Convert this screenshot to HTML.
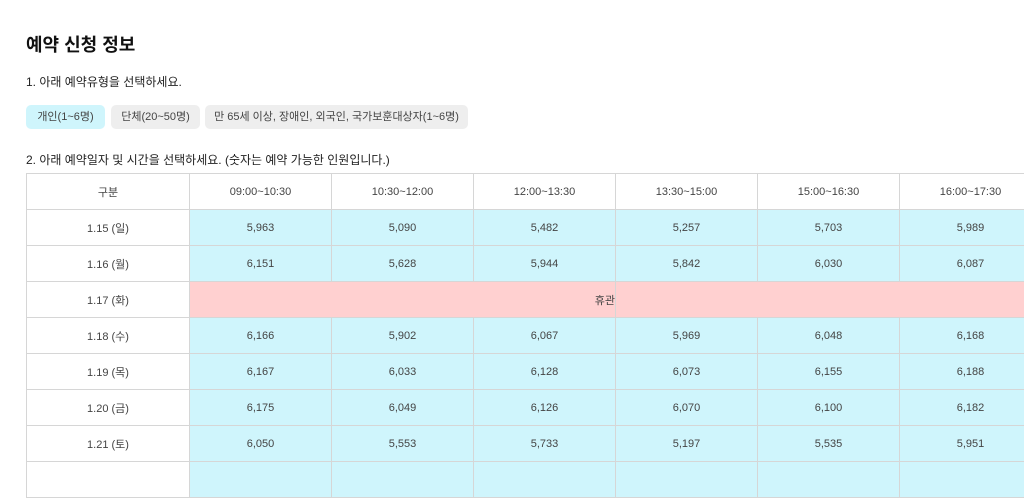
<!DOCTYPE html><html><head><meta charset="utf-8"><style>
*{margin:0;padding:0;box-sizing:border-box}
body{width:1024px;height:466px;overflow:hidden;background:#fff;font-family:"Liberation Sans","Noto Sans CJK KR",sans-serif;color:#222;position:relative}
h1{position:absolute;left:26px;top:31px;font-size:18px;font-weight:bold;color:#111}
.p{position:absolute;left:26px;font-size:12px;color:#222}
.b{position:absolute;top:105px;height:24px;border-radius:5px;background:#eee;font-size:11px;color:#444;text-align:center;line-height:24px}
table{position:absolute;left:26px;top:173px;border-collapse:collapse;table-layout:fixed;width:1157px}
td{border:1px solid #d6d6d6;height:36px;text-align:center;font-size:11px;color:#444}
td.c{background:#cff5fc}
td.r{background:#ffd0d0}
</style></head><body>
<h1>예약 신청 정보</h1>
<div class="p" style="top:73px">1. 아래 예약유형을 선택하세요.</div>
<div class="b" style="left:26px;width:79px;background:#cff5fc">개인(1~6명)</div>
<div class="b" style="left:111px;width:89px">단체(20~50명)</div>
<div class="b" style="left:205px;width:263px">만 65세 이상, 장애인, 외국인, 국가보훈대상자(1~6명)</div>
<div class="p" style="top:151px">2. 아래 예약일자 및 시간을 선택하세요. (숫자는 예약 가능한 인원입니다.)</div>
<table>
<colgroup><col style="width:163px"><col style="width:142px"><col style="width:142px"><col style="width:142px"><col style="width:142px"><col style="width:142px"><col style="width:142px"><col style="width:142px"></colgroup>
<tr><td>구분</td><td>09:00~10:30</td><td>10:30~12:00</td><td>12:00~13:30</td><td>13:30~15:00</td><td>15:00~16:30</td><td>16:00~17:30</td><td></td></tr>
<tr><td>1.15 (일)</td><td class="c">5,963</td><td class="c">5,090</td><td class="c">5,482</td><td class="c">5,257</td><td class="c">5,703</td><td class="c">5,989</td><td class="c"></td></tr>
<tr><td>1.16 (월)</td><td class="c">6,151</td><td class="c">5,628</td><td class="c">5,944</td><td class="c">5,842</td><td class="c">6,030</td><td class="c">6,087</td><td class="c"></td></tr>
<tr><td>1.17 (화)</td><td class="r" colspan="3" style="text-align:right;padding-right:0">휴관</td><td class="r" colspan="4" style="border-left:none"></td></tr>
<tr><td>1.18 (수)</td><td class="c">6,166</td><td class="c">5,902</td><td class="c">6,067</td><td class="c">5,969</td><td class="c">6,048</td><td class="c">6,168</td><td class="c"></td></tr>
<tr><td>1.19 (목)</td><td class="c">6,167</td><td class="c">6,033</td><td class="c">6,128</td><td class="c">6,073</td><td class="c">6,155</td><td class="c">6,188</td><td class="c"></td></tr>
<tr><td>1.20 (금)</td><td class="c">6,175</td><td class="c">6,049</td><td class="c">6,126</td><td class="c">6,070</td><td class="c">6,100</td><td class="c">6,182</td><td class="c"></td></tr>
<tr><td>1.21 (토)</td><td class="c">6,050</td><td class="c">5,553</td><td class="c">5,733</td><td class="c">5,197</td><td class="c">5,535</td><td class="c">5,951</td><td class="c"></td></tr>
<tr><td></td><td class="c"></td><td class="c"></td><td class="c"></td><td class="c"></td><td class="c"></td><td class="c"></td><td class="c"></td></tr>
</table>
</body></html>
